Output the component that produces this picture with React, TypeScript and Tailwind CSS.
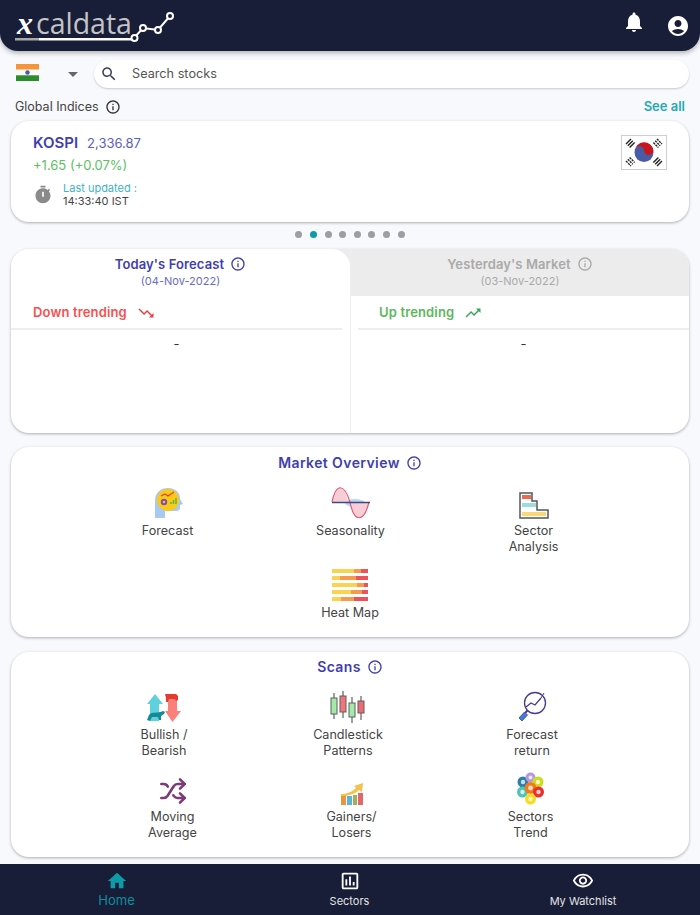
import { Shuffle } from "lucide-react";

const MuiIcon = ({ d, className }: { d: string; className?: string }) => (
  <svg viewBox="0 0 24 24" fill="currentColor" className={className}>
    <path d={d} />
  </svg>
);

const paths = {
  bell: "M12 22c1.1 0 2-.9 2-2h-4c0 1.1.89 2 2 2zm6-6v-5c0-3.07-1.64-5.64-4.5-6.32V4c0-.83-.67-1.5-1.5-1.5s-1.5.67-1.5 1.5v.68C7.63 5.36 6 7.92 6 11v5l-2 2v1h16v-1l-2-2z",
  account:
    "M12 2C6.48 2 2 6.48 2 12s4.48 10 10 10 10-4.48 10-10S17.52 2 12 2zm0 4c1.93 0 3.5 1.57 3.5 3.5S13.93 13 12 13s-3.5-1.57-3.5-3.5S10.07 6 12 6zm0 14c-2.03 0-4.43-.82-6.14-2.88C7.55 15.8 9.68 15 12 15s4.45.8 6.14 2.12C16.43 19.18 14.03 20 12 20z",
  home: "M10 20v-6h4v6h5v-8h3L12 3 2 12h3v8z",
  sectors:
    "M19 3H5c-1.1 0-2 .9-2 2v14c0 1.1.9 2 2 2h14c1.1 0 2-.9 2-2V5c0-1.1-.9-2-2-2zm0 16H5V5h14v14zM7 10h2v7H7zm4-3h2v10h-2zm4 6h2v4h-2z",
  eye: "M12 6c3.79 0 7.17 2.13 8.82 5.5C19.17 14.87 15.79 17 12 17s-7.17-2.13-8.82-5.5C4.83 8.13 8.21 6 12 6m0-2C7 4 2.73 7.11 1 11.5 2.73 15.89 7 19 12 19s9.27-3.11 11-7.5C21.27 7.11 17 4 12 4zm0 5c1.38 0 2.5 1.12 2.5 2.5S13.38 14 12 14s-2.5-1.12-2.5-2.5S10.62 9 12 9m0-2c-2.48 0-4.5 2.02-4.5 4.5S9.52 16 12 16s4.5-2.02 4.5-4.5S14.48 7 12 7z",
  info: "M11 7h2v2h-2zm0 4h2v6h-2zm1-9C6.48 2 2 6.48 2 12s4.48 10 10 10 10-4.48 10-10S17.52 2 12 2zm0 18c-4.41 0-8-3.59-8-8s3.59-8 8-8 8 3.59 8 8-3.59 8-8 8z",
  search:
    "M15.5 14h-.79l-.28-.27C15.41 12.59 16 11.11 16 9.5 16 5.91 13.09 3 9.5 3S3 5.91 3 9.5 5.91 16 9.5 16c1.61 0 3.09-.59 4.23-1.57l.27.28v.79l5 4.99L20.49 19l-4.99-5zm-6 0C7.01 14 5 11.99 5 9.5S7.01 5 9.5 5 14 7.01 14 9.5 11.99 14 9.5 14z",
  down: "M16 18l2.29-2.29-4.88-4.88-4 4L2 7.41 3.41 6l6 6 4-4 6.3 6.29L22 12v6z",
  up: "M16 6l2.29 2.29-4.88 4.88-4-4L2 16.59 3.41 18l6-6 4 4 6.3-6.29L22 12V6z",
  timer:
    "M15 1H9v2h6V1zm4.03 6.39l1.42-1.42c-.43-.51-.9-.99-1.41-1.41l-1.42 1.42C16.07 4.74 14.12 4 12 4c-4.97 0-9 4.03-9 9s4.02 9 9 9 9-4.03 9-9c0-2.12-.74-4.07-1.97-5.61zM13 14h-2V8h2v6z",
};

const Logo = () => (
  <div className="relative w-[175px] h-[45px]">
    <div className="absolute left-[17px] top-[8px] flex items-baseline">
      <span className="text-white text-[32px] font-bold italic font-['Liberation_Serif',serif] leading-[30px]">x</span>
      <span className="ml-[3px] text-[#c4c4c4] text-[28.500px] font-['Open_Sans',sans-serif] leading-[30px]">caldata</span>
    </div>
    <svg viewBox="0 0 175 45" className="absolute inset-0 w-[175px] h-[45px]" fill="none">
      <rect x="15" y="38" width="24" height="2.500" fill="#a9a9a9" />
      <rect x="39" y="38" width="95" height="2.500" fill="#ffffff" />
      <path d="M134 38 L143 28 L158 30 L170 16" stroke="#fff" strokeWidth="2" />
      <circle cx="134.500" cy="38" r="3" fill="#181d38" stroke="#fff" strokeWidth="2" />
      <circle cx="143" cy="28" r="3" fill="#181d38" stroke="#fff" strokeWidth="2" />
      <circle cx="158" cy="30" r="3" fill="#181d38" stroke="#fff" strokeWidth="2" />
      <circle cx="170" cy="16" r="3" fill="#181d38" stroke="#fff" strokeWidth="2" />
    </svg>
  </div>
);

const IndiaFlag = () => (
  <svg viewBox="0 0 23 17" className="w-[23px] h-[17px] mb-[4px]">
    <rect width="23" height="5.700" fill="#f5953a" />
    <rect y="5.700" width="23" height="5.600" fill="#f8f8fa" />
    <rect y="11.300" width="23" height="5.700" fill="#2e8b2e" />
    <circle cx="11.500" cy="8.500" r="2.200" fill="#4a5aa8" />
  </svg>
);

const KoreaFlag = () => (
  <svg viewBox="0 0 46 35" className="w-[46px] h-[35px] mt-[1px]">
    <rect x="0.500" y="0.500" width="45" height="34" fill="#fff" stroke="#cfcfcf" />
    <circle cx="23" cy="17.500" r="9.500" fill="#4a5ba6" />
    <path d="M13.600 16 A9.500 9.500 0 0 1 32.400 15 A4.700 4.700 0 0 1 23 15.500 A4.700 4.700 0 0 0 13.600 16 Z" fill="#c9151e" />
    <g stroke="#222" strokeWidth="1.400">
      <path d="M5 9 L10 4 M6.800 10.800 L11.800 5.800 M8.600 12.600 L13.600 7.600" />
      <path d="M32.400 7.600 L37.400 12.600 M34.200 5.800 L39.200 10.800 M36 4 L41 9" strokeDasharray="2.200 0.800" />
      <path d="M5 26 L10 31 M6.800 24.200 L11.800 29.200 M8.600 22.400 L13.600 27.400" strokeDasharray="2.200 0.800" />
      <path d="M32.400 27.400 L37.400 22.400 M34.200 29.200 L39.200 24.200 M36 31 L41 26" />
    </g>
  </svg>
);

const ForecastIcon = () => (
  <svg viewBox="0 0 30 32" className="w-[30px] h-[32px]">
    <path d="M2 31 V14 C2 5 8 1 15 1 C23 1 27 6 27 12 L30 17 L27 18 V21 C27 24 24 24 21 24 H12 V31 Z" fill="#a9c9f5" />
    <circle cx="15" cy="13" r="11" fill="#fbc916" />
    <path d="M8 9 L12 7 L15 9 L21 5" stroke="#e2452f" strokeWidth="1.300" fill="none" />
    <circle cx="11" cy="15" r="3.200" fill="#7a4fc0" />
    <circle cx="11" cy="15" r="1.200" fill="#fbc916" />
    <path d="M18 17 V15 M20.500 17 V13 M23 17 V11" stroke="#5fb54a" strokeWidth="1.500" />
  </svg>
);

const SeasonalityIcon = () => (
  <svg viewBox="0 0 40 32" className="w-[40px] h-[32px]">
    <ellipse cx="24" cy="16" rx="10" ry="4" fill="#bcd6f5" />
    <path d="M1 15 C5 -4 13 -4 17 15 Z" fill="#f7cdd6" />
    <path d="M19 15 C23 36 33 36 38 15 Z" fill="#f7cdd6" />
    <path d="M1 15 C5 -4 13 -4 19 15 C23 36 33 36 38 15" fill="none" stroke="#df5d78" strokeWidth="1.200" />
    <path d="M1 15.500 H39" stroke="#3d4a80" strokeWidth="1.500" />
  </svg>
);

const SectorIcon = () => (
  <svg viewBox="0 0 30 27" className="w-[30px] h-[27px]">
    <path d="M1 1 H13 V9 H18 V18 H29 V26 H1 Z" fill="#fff" stroke="#555" strokeWidth="1.500" />
    <rect x="3" y="3" width="9" height="4" fill="#f0674f" />
    <rect x="3" y="11" width="14" height="4" fill="#9fdbe2" />
    <rect x="3" y="20" width="24" height="4" fill="#fbd77b" />
  </svg>
);

const heatRows = [
  [62, 18, 20],
  [22, 44, 34],
  [68, 21, 11],
  [52, 30, 18],
  [27, 33, 40],
];

const HeatMapIcon = () => (
  <div className="flex flex-col gap-[2.500px] w-[37px]">
    {heatRows.map((row, i) => (
      <div key={i} className="flex h-[4.500px]">
        <div className="bg-[#fbd350]" style={{ width: `${row[0]}%` }} />
        <div className="bg-[#f79a4b]" style={{ width: `${row[1]}%` }} />
        <div className="bg-[#f0505a]" style={{ width: `${row[2]}%` }} />
      </div>
    ))}
  </div>
);

const BullBearIcon = () => (
  <svg viewBox="0 0 36 30" className="w-[36px] h-[30px]">
    <path d="M9 1 L17 11 H13 V28 H4 V11 H1 Z" fill="#5fd0dc" />
    <path d="M1 27 L3 22 C6 18 12 21 17 18 L19 19 L18 21 L15 23 L15 27 H13 L12 24 L6 24 L4 28 Z" fill="#128a99" />
    <path d="M22 6 H31 V18 H35 L26.500 29 L19 18 H22 Z" fill="#fb7f7a" />
    <path d="M19 1 H30 L32 3 V7 L30 8 L29 6 H23 L22 9 H20 V5 Z" fill="#e83a2c" />
  </svg>
);

const candles = [
  { x: 4, top: 2, bottom: 28, y: 7, h: 16, fill: "#a5e8a8" },
  { x: 13, top: 0, bottom: 27, y: 5, h: 16, fill: "#f0767c" },
  { x: 22, top: 6, bottom: 32, y: 12, h: 14, fill: "#a5e8a8" },
  { x: 31, top: 5, bottom: 29, y: 10, h: 12, fill: "#ee6a72" },
];

const CandleIcon = () => (
  <svg viewBox="0 0 36 32" className="w-[36px] h-[32px]">
    {candles.map((c) => (
      <g key={c.x}>
        <path d={`M${c.x} ${c.top} V${c.bottom}`} stroke="#5f5f5f" strokeWidth="1.200" />
        <rect x={c.x - 3} y={c.y} width="6" height={c.h} fill={c.fill} stroke="#5f5f5f" />
      </g>
    ))}
  </svg>
);

const ForecastReturnIcon = () => (
  <svg viewBox="0 0 30 32" className="w-[30px] h-[32px]" fill="none">
    <circle cx="18" cy="12" r="10.500" stroke="#4b3a8c" strokeWidth="1.300" />
    <path d="M9 16 L14 12 L18 14 L24 7" stroke="#4b3a8c" strokeWidth="1.300" />
    <path d="M27 2 L24 7" stroke="#4b3a8c" strokeWidth="1" />
    <path d="M10.500 19.500 L8 22" stroke="#4b3a8c" strokeWidth="2" />
    <path d="M7.500 21 L2 27 L5 30 L10.500 24 Z" fill="#3e7cdb" stroke="#4b3a8c" strokeWidth="0.800" />
  </svg>
);

const GainersIcon = () => (
  <svg viewBox="0 0 24 22" className="w-[24px] h-[22px]">
    <rect x="1" y="11" width="5" height="11" fill="#e9963e" />
    <rect x="7" y="13" width="5" height="9" fill="#5eb4d6" />
    <rect x="13" y="12" width="4" height="10" fill="#a6ad58" />
    <rect x="18" y="10" width="5" height="12" fill="#e0686c" />
    <path d="M1 11 C7 11 12 9 16 5 L14 3 L23 0 L22 9 L19 7 C15 11 8 13 1 13 Z" fill="#f2c14e" />
  </svg>
);

const hexes = [
  { cx: 12, cy: 8, fill: "#2b7fa8", r: 5.500 },
  { cx: 19.500, cy: 3.500, fill: "#b49ad8", r: 5 },
  { cx: 27, cy: 8, fill: "#cfdc1e", r: 5.500 },
  { cx: 11.500, cy: 18, fill: "#4cc4b8", r: 5.500 },
  { cx: 19.500, cy: 14, fill: "#f27a1a", r: 6 },
  { cx: 27.500, cy: 18, fill: "#e83030", r: 5.500 },
  { cx: 19.500, cy: 25, fill: "#f7dc24", r: 5.500 },
];

const SectorsTrendIcon = () => (
  <svg viewBox="4 -2 31 33" className="w-[31px] h-[33px]">
    {hexes.map((h) => (
      <g key={h.fill}>
        <circle cx={h.cx} cy={h.cy} r={h.r} fill={h.fill} />
        <circle cx={h.cx} cy={h.cy} r={h.r * 0.4} fill="#ffffff" fillOpacity="0.75" />
      </g>
    ))}
  </svg>
);

const Tile = ({ icon, lines }: { icon: React.ReactNode; lines: string[] }) => (
  <div className="flex flex-col items-center">
    <div className="flex items-end justify-center h-[33px]">{icon}</div>
    <div className="mt-[4px] text-center text-[12.600px] leading-[16px] text-[#444]">
      {lines.map((l) => (
        <div key={l}>{l}</div>
      ))}
    </div>
  </div>
);

const Title = ({ text }: { text: string }) => (
  <div className="flex items-center justify-center gap-[6px]">
    <span className="text-[14px] leading-[18px] font-semibold text-[#3f3fb0] tracking-[0.4px]">{text}</span>
    <MuiIcon d={paths.info} className="w-[16px] h-[16px] text-[#3f3fb0]" />
  </div>
);

const TabHead = ({ title, date, active }: { title: string; date: string; active: boolean }) => (
  <div className={`flex flex-col items-center pt-[6px] ${active ? "text-[#3f3fb0]" : "text-[#a9a9a9]"}`}>
    <div className="flex items-center gap-[6px]">
      <span className="text-[13px] leading-[18px] font-semibold tracking-[0.1px]">{title}</span>
      <MuiIcon d={paths.info} className="w-[16px] h-[16px]" />
    </div>
    <span className={`mt-[1px] text-[11px] leading-[14px] ${active ? "text-[#6a6ac4]" : "text-[#a9a9a9]"}`}>{date}</span>
  </div>
);

const Trend = ({ label, up }: { label: string; up: boolean }) => (
  <div className={`flex items-center h-[34px] pt-[2px] border-b-2 border-[#eeeeee] ${up ? "pl-[21px] text-[#5cb85c]" : "pl-[22px] text-[#f9504f]"}`}>
    <span className="text-[13px] font-semibold tracking-[0.15px]">{label}</span>
    <MuiIcon d={up ? paths.up : paths.down} className={`w-[18px] h-[18px] ml-[10px] ${up ? "text-[#35a853]" : "text-[#ee3b3b]"}`} />
  </div>
);

export default function App() {
  return (
    <div className="w-[700px] h-[915px] overflow-hidden flex flex-col bg-[#f8f9fc] font-['Inter',sans-serif]">
      <header className="h-[51px] shrink-0 bg-[#181d38] rounded-b-[18px] shadow-[0_2px_5px_rgba(0,0,0,0.3)] flex items-start justify-between">
        <Logo />
        <div className="flex items-start gap-[20px] pr-[10px] pt-[10px]">
          <MuiIcon d={paths.bell} className="w-[24px] h-[24px] text-white" />
          <MuiIcon d={paths.account} className="w-[24px] h-[24px] mt-[4px] text-white" />
        </div>
      </header>

      <div className="flex items-center mt-[9px] h-[28px] pl-[16px] pr-[11px]">
        <IndiaFlag />
        <div className="ml-[29px] w-0 h-0 border-x-[5px] border-x-transparent border-t-[5px] border-t-[#666]" />
        <div className="ml-[16px] flex-1 h-[28px] bg-white rounded-full shadow-[0_1px_2px_rgba(0,0,0,0.2)] flex items-center pl-[6px]">
          <MuiIcon d={paths.search} className="w-[18px] h-[18px] text-[#3a3f5a]" />
          <span className="ml-[14px] text-[12.700px] text-[#555]">Search stocks</span>
        </div>
      </div>

      <div className="flex items-center justify-between mt-[10px] h-[18px] px-[15px]">
        <div className="flex items-center gap-[6px]">
          <span className="text-[12.500px] text-[#444]">Global Indices</span>
          <MuiIcon d={paths.info} className="w-[16px] h-[16px] text-[#333]" />
        </div>
        <span className="text-[13px] font-semibold text-[#27a9b5]">See all</span>
      </div>

      <section className="mx-[11px] mt-[5px] h-[101px] shrink-0 bg-white rounded-[18px] shadow-[0_1px_3px_rgba(0,0,0,0.3)] flex justify-between px-[22px] pt-[13px]">
        <div>
          <div className="flex items-baseline gap-[9px] leading-[18px]">
            <span className="text-[15px] font-semibold text-[#3f3fb0]">KOSPI</span>
            <span className="text-[13px] text-[#5e5ec0]">2,336.87</span>
          </div>
          <div className="mt-[4px] text-[13px] leading-[18px] text-[#5cbf60]">+1.65 (+0.07%)</div>
          <div className="mt-[8px] flex items-center">
            <MuiIcon d={paths.timer} className="w-[20px] h-[20px] text-[#8a8a8a]" />
            <div className="ml-[10px] text-[11px] leading-[13px]">
              <div className="text-[#3fb3bf]">Last updated :</div>
              <div className="text-[#444]">14:33:40 IST</div>
            </div>
          </div>
        </div>
        <KoreaFlag />
      </section>

      <div className="flex justify-center gap-[7.600px] mt-[9px] h-[7px] shrink-0">
        {[0, 1, 2, 3, 4, 5, 6, 7].map((i) => (
          <span key={i} className={`w-[7px] h-[7px] rounded-full ${i === 1 ? "bg-[#0e9aa7]" : "bg-[#9e9e9e]"}`} />
        ))}
      </div>

      <section className="mx-[11px] mt-[11px] h-[184px] shrink-0 bg-white rounded-[18px] shadow-[0_1px_3px_rgba(0,0,0,0.3)] grid grid-cols-2 overflow-hidden">
        <div>
          <div className="h-[47px] bg-[#ececec]">
            <div className="h-full bg-white rounded-tr-[18px]">
              <TabHead title="Today's Forecast" date="(04-Nov-2022)" active />
            </div>
          </div>
          <div className="mr-[8px]">
            <Trend label="Down trending" up={false} />
            <div className="text-center text-[13px] text-[#333] pt-[5px]">-</div>
          </div>
        </div>
        <div className="border-l border-[#eeeeee]">
          <div className="h-[47px] bg-[#ececec]">
            <TabHead title="Yesterday's Market" date="(03-Nov-2022)" active={false} />
          </div>
          <div className="pl-[7px]">
            <Trend label="Up trending" up />
            <div className="text-center text-[13px] text-[#333] pt-[5px]">-</div>
          </div>
        </div>
      </section>

      <section className="mx-[11px] mt-[14px] h-[190px] shrink-0 bg-white rounded-[18px] shadow-[0_1px_3px_rgba(0,0,0,0.3)] pt-[7px]">
        <Title text="Market Overview" />
        <div className="grid grid-cols-[183px_183px_183px] ml-[65px] mt-[14px]">
          <Tile icon={<ForecastIcon />} lines={["Forecast"]} />
          <Tile icon={<SeasonalityIcon />} lines={["Seasonality"]} />
          <Tile icon={<SectorIcon />} lines={["Sector", "Analysis"]} />
        </div>
        <div className="flex justify-center mt-[13px]">
          <Tile icon={<HeatMapIcon />} lines={["Heat Map"]} />
        </div>
      </section>

      <section className="mx-[11px] mt-[15px] h-[205px] shrink-0 bg-white rounded-[18px] shadow-[0_1px_3px_rgba(0,0,0,0.3)] pt-[6px]">
        <Title text="Scans" />
        <div className="grid grid-cols-[184px_184px_184px] ml-[61px] mt-[14px]">
          <Tile icon={<BullBearIcon />} lines={["Bullish /", "Bearish"]} />
          <Tile icon={<CandleIcon />} lines={["Candlestick", "Patterns"]} />
          <Tile icon={<ForecastReturnIcon />} lines={["Forecast", "return"]} />
        </div>
        <div className="grid grid-cols-[179px_179px_179px] ml-[72px] mt-[13px]">
          <Tile icon={<Shuffle className="w-[28px] h-[28px] text-[#7b3a78]" strokeWidth={2.2} />} lines={["Moving", "Average"]} />
          <Tile icon={<GainersIcon />} lines={["Gainers/", "Losers"]} />
          <Tile icon={<SectorsTrendIcon />} lines={["Sectors", "Trend"]} />
        </div>
      </section>

      <nav className="mt-[7px] flex-1 bg-[#181d38] flex">
        <div className="w-[233px] flex flex-col items-center pt-[6px]">
          <MuiIcon d={paths.home} className="w-[22px] h-[22px] text-[#0e9aa7]" />
          <span className="text-[13px] leading-[16px] text-[#0e8f9c]">Home</span>
        </div>
        <div className="w-[233px] flex flex-col items-center pt-[6px]">
          <MuiIcon d={paths.sectors} className="w-[22px] h-[22px] text-white" />
          <span className="mt-[2px] text-[11px] leading-[14px] text-[#e4e4e4]">Sectors</span>
        </div>
        <div className="w-[234px] flex flex-col items-center pt-[6px]">
          <MuiIcon d={paths.eye} className="w-[22px] h-[22px] text-white" />
          <span className="mt-[2px] text-[11px] leading-[14px] text-[#e4e4e4]">My Watchlist</span>
        </div>
      </nav>
    </div>
  );
}
